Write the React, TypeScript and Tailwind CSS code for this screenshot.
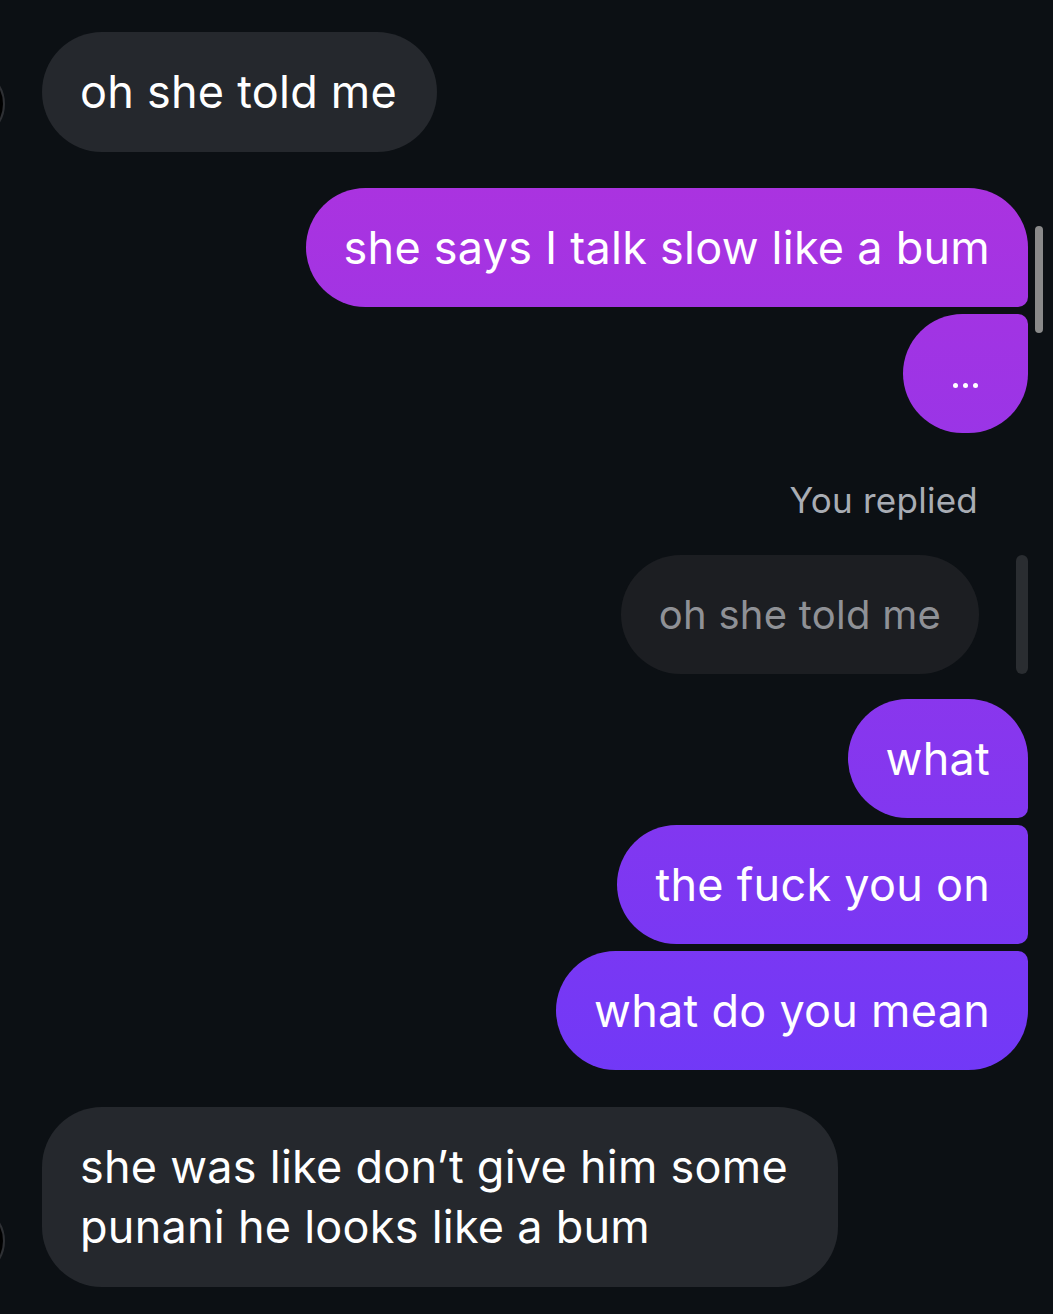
import React from "react";

const grad =
  "bg-[linear-gradient(180deg,#b632db_0px,#623afd_1314px)] bg-fixed";

function Out({ text, cls }: { text: React.ReactNode; cls: string }) {
  return (
    <div
      className={`${grad} ${cls} h-[119px] px-[38px] flex items-center text-white text-[45px] leading-[60px] whitespace-nowrap`}
    >
      {text}
    </div>
  );
}

export default function App() {
  return (
    <div className="relative w-[1053px] h-[1314px] overflow-hidden bg-[#0c1014] font-['Inter','Roboto',sans-serif] flex flex-col tracking-[0.25px]">
      {/* incoming 1 */}
      <div className="relative mt-[32px] pl-[42px] flex">
        <div className="absolute left-[-67px] bottom-[12px] w-[72px] h-[72px] rounded-full bg-black border-2 border-[#2e3034]" />
        <div className="bg-[#25282d] rounded-[60px] pl-[38px] pr-[40px] py-[30px] text-white text-[45px] leading-[60px] whitespace-nowrap">
          oh she told me
        </div>
      </div>

      {/* outgoing group 1 */}
      <div className="relative mt-[36px] pr-[25px] flex flex-col items-end gap-[7px]">
        <Out text="she says I talk slow like a bum" cls="rounded-[60px] rounded-br-[10px]" />
        <div
          className={`${grad} rounded-[60px] rounded-tr-[10px] h-[119px] w-[125px] flex items-center justify-center`}
        >
          <div className="flex gap-[5px] mt-[24px]">
            <span className="w-[5px] h-[5px] rounded-full bg-white" />
            <span className="w-[5px] h-[5px] rounded-full bg-white" />
            <span className="w-[5px] h-[5px] rounded-full bg-white" />
          </div>
        </div>
        <div className="absolute right-[10px] top-[38px] w-[8px] h-[107px] rounded-full bg-[#8a8a8a]" />
      </div>

      {/* you replied */}
      <div className="mt-[47px] pr-[75px] flex justify-end text-[35px] leading-[40px] text-[#a9adb4]">
        You replied
      </div>

      <div className="mt-[35px] pr-[25px] flex justify-end gap-[37px]">
        <div className="h-[119px] flex items-center bg-[#1c1e22] rounded-[60px] px-[38px] text-[#8f9196] text-[40px] leading-[59px] whitespace-nowrap">
          oh she told me
        </div>
        <div className="w-[12px] rounded-full bg-[#2a2d31]" />
      </div>

      {/* outgoing group 2 */}
      <div className="mt-[25px] pr-[25px] flex flex-col items-end gap-[7px]">
        <Out text="what" cls="rounded-[60px] rounded-br-[10px]" />
        <Out text="the fuck you on" cls="rounded-[60px] rounded-tr-[10px] rounded-br-[10px]" />
        <Out text="what do you mean" cls="rounded-[60px] rounded-tr-[10px]" />
      </div>

      {/* incoming 2 */}
      <div className="relative mt-[37px] pl-[42px] flex">
        <div className="absolute left-[-67px] bottom-[10px] w-[72px] h-[72px] rounded-full bg-black border-2 border-[#2e3034]" />
        <div className="w-[796px] bg-[#25282d] rounded-[60px] px-[38px] py-[30px] text-white text-[45px] leading-[60px]">
          she was like don’t give him some
          <br />
          punani he looks like a bum
        </div>
      </div>
    </div>
  );
}
